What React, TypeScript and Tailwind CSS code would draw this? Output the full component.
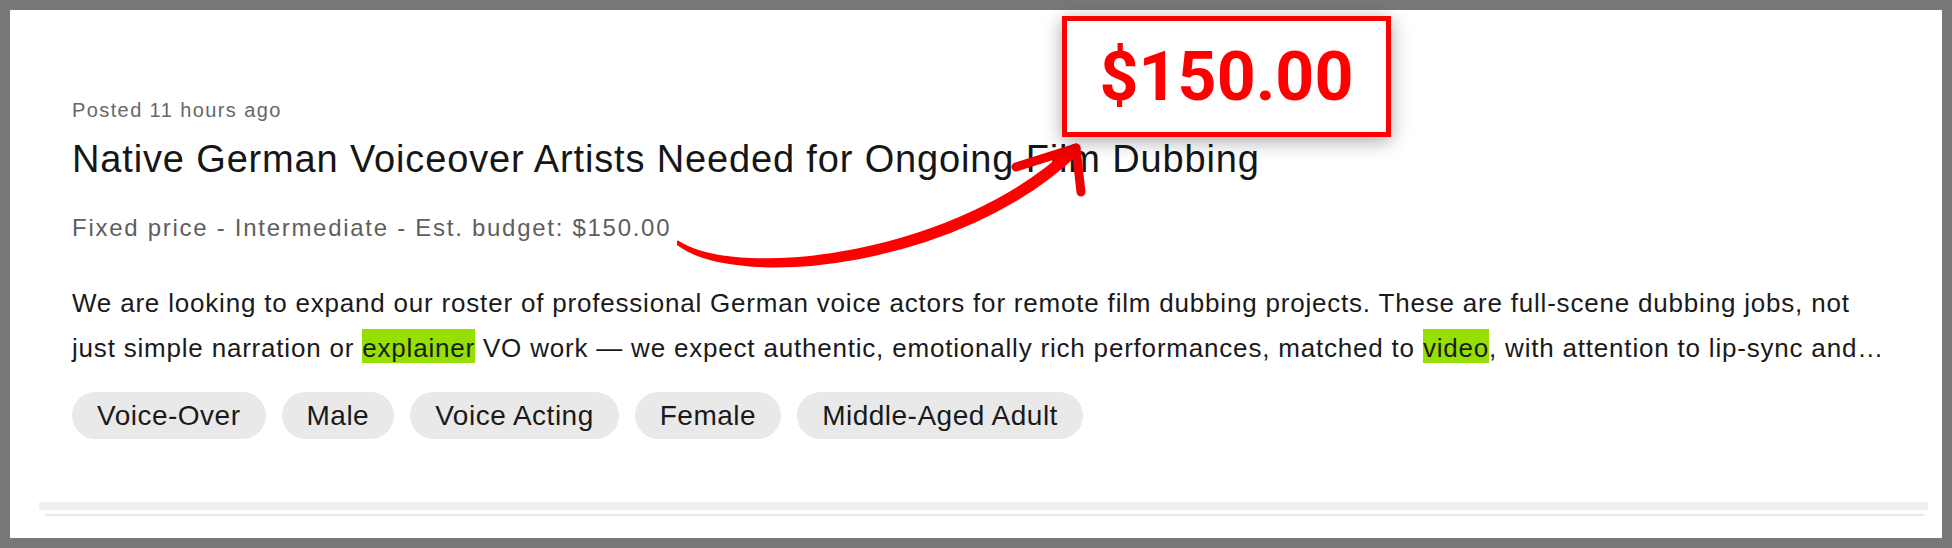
import React from "react";

const tags = ["Voice-Over", "Male", "Voice Acting", "Female", "Middle-Aged Adult"];

const Highlight = ({ children }: { children: React.ReactNode }) => (
  <span className="bg-[#95e000] pt-[4px]">{children}</span>
);

const PriceArrow = () => (
  <svg
    className="pointer-events-none absolute left-0 top-0"
    width="1952"
    height="548"
    viewBox="0 0 1952 548"
  >
    <path
      d="M678 241.5 C740 282 960 255 1073 145 L1079 152 C962 267 738 290 678 244.5 Z"
      fill="#ff0000"
      stroke="#ff0000"
      strokeWidth="2"
      strokeLinejoin="round"
    />
    <path
      d="M1016 167 L1076 148"
      stroke="#f20000"
      strokeWidth="9"
      strokeLinecap="round"
    />
    <path
      d="M1076 148 L1081 192"
      stroke="#f20000"
      strokeWidth="9"
      strokeLinecap="round"
    />
  </svg>
);

export default function App() {
  return (
    <div className="relative h-[548px] w-[1952px] bg-[#787878] p-[10px] font-['Liberation_Sans',Arial,sans-serif]">
      <div className="relative flex h-full flex-col bg-white">
        <div className="pl-[62px] pt-[86px]">
          <p className="text-[20px] leading-[28px] tracking-[1.4px] text-[#676767]">
            Posted 11 hours ago
          </p>
          <h2 className="mt-[12px] text-[38px] leading-[46px] tracking-[0.85px] text-[#161616]">
            Native German Voiceover Artists Needed for Ongoing Film Dubbing
          </h2>
          <p className="mt-[30px] text-[24px] leading-[32px] tracking-[1.72px] text-[#5e5e5e]">
            Fixed price - Intermediate - Est. budget: $150.00
          </p>
          <p className="mt-[37px] whitespace-nowrap text-[26px] leading-[45px] tracking-[0.8px] text-[#1a1a1a]">
            We are looking to expand our roster of professional German voice actors for remote film
            dubbing projects. These are full-scene dubbing jobs, not
            <br />
            just simple narration or <Highlight>explainer</Highlight> VO work — we expect authentic,
            emotionally rich performances, matched to <Highlight>video</Highlight>, with attention
            to lip-sync and…
          </p>
          <div className="mt-[21px] flex gap-[16px]">
            {tags.map((tag) => (
              <span
                key={tag}
                className="flex h-[47px] items-center rounded-full bg-[#e9e9e9] px-[25px] text-[28px] tracking-[0.5px] text-[#1a1a1a]"
              >
                {tag}
              </span>
            ))}
          </div>
        </div>
        <div className="ml-[29px] mr-[14px] mt-[63px] h-[8px] bg-[#efefef]" />
        <div className="ml-[35px] mr-[18px] mt-[4px] h-[2px] bg-[#e9e9e9]" />
      </div>
      <PriceArrow />
      <div className="absolute left-[1062px] top-[16px] flex h-[121px] w-[329px] items-center justify-center border-[5px] border-[#ff0000] bg-white shadow-[0_4px_18px_rgba(0,0,0,0.35)]">
        <span className="font-['Roboto',sans-serif] text-[68px] font-bold leading-none text-[#ff0000]">
          $150.00
        </span>
      </div>
    </div>
  );
}
